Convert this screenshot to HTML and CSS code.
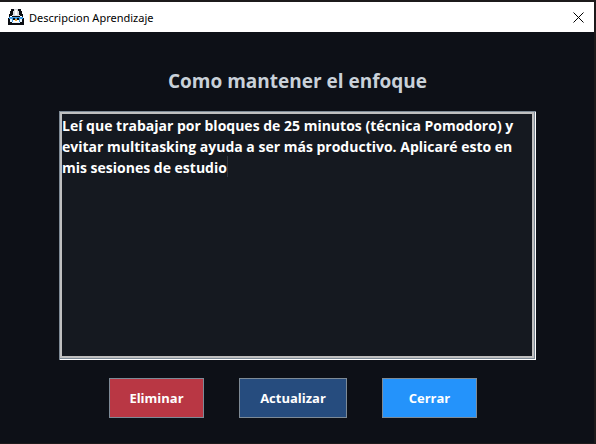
FILE: index.html
```
<!DOCTYPE html>
<html lang="es">
<head>
<meta charset="utf-8">
<title>Descripcion Aprendizaje</title>
<link rel="stylesheet" href="styles.css">
</head>
<body>
<div class="window">
  <header class="titlebar">
    <svg class="app-icon" viewBox="0 0 16 16" shape-rendering="crispEdges" aria-hidden="true">
      <path fill="#0b0d12" d="M3 0h10v2h1v3h1v4h1v7H0V9h1V5h1V2h1z"/>
      <path fill="#d9dce2" d="M6 0h4v2h1v4h1v1H4V6h1V2h1z"/>
      <path fill="#fff" d="M7 1h2v5H7zM2 7h2v1H2zM12 7h2v1h-2z"/>
      <path fill="#3d9be8" d="M1 8h14v2h-1v2h-2v1H4v-1H2v-2H1z"/>
      <path fill="#e9f5fd" d="M2 10h2v3H2zM12 10h2v3h-2zM4 13h8v1H4z"/>
      <path fill="#0b0d12" d="M5 9h2v2H5zM9 9h2v2H9z"/>
      <path fill="#fff" d="M5 11h6v2H5z"/>
      <path fill="#f0a72c" d="M7 10h2v2H7z"/>
    </svg>
    <h1 class="titlebar-text">Descripcion Aprendizaje</h1>
    <button class="close" type="button" aria-label="Cerrar ventana">
      <svg viewBox="0 0 11 11" aria-hidden="true"><path d="M.5 .5l10 10M10.500 .5l-10 10"/></svg>
    </button>
  </header>
  <main class="content">
    <label class="heading" for="descripcion">Como mantener el enfoque</label>
    <div class="field">
      <textarea id="descripcion" spellcheck="false">Leí que trabajar por bloques de 25 minutos (técnica Pomodoro) y evitar multitasking ayuda a ser más productivo. Aplicaré esto en mis sesiones de estudio</textarea>
      <span class="caret"></span>
    </div>
    <div class="actions">
      <button class="btn btn-delete" type="button">Eliminar</button>
      <button class="btn btn-update" type="button">Actualizar</button>
      <button class="btn btn-close" type="button">Cerrar</button>
    </div>
  </main>
</div>
</body>
</html>
```
FILE: styles.css
```
* { box-sizing: border-box; }

body {
  margin: 0;
  background: #0d1017;
  font-family: "Open Sans", "Noto Sans", sans-serif;
}

.window {
  display: flex;
  flex-direction: column;
  min-height: 100vh;
  border: solid #1c1a1b;
  border-width: 2px 2px 1px 0;
}

.titlebar {
  display: flex;
  align-items: center;
  height: 30px;
  padding: 0 10px 0 8px;
  background: #fff;
  color: #000;
}

.app-icon { width: 16px; height: 16px; margin-right: 5px; }

.titlebar-text {
  flex: 1;
  margin: 0;
  font-family: "Noto Sans", sans-serif;
  font-size: 11px;
  font-weight: 400;
}

.close {
  display: flex;
  padding: 0;
  border: 0;
  background: none;
}

.close svg { width: 11px; height: 11px; }
.close path { stroke: #000; fill: none; }

.content {
  flex: 1;
  display: flex;
  flex-direction: column;
  padding: 34px 58px 25px 59px;
}

.heading {
  color: #c9d1d9;
  font-size: 19px;
  font-weight: 700;
  line-height: 30px;
  text-align: center;
  margin-bottom: 15px;
}

.field {
  position: relative;
  flex: 1;
  display: flex;
  border: solid #7d8a96;
  border-width: 1px 0 0 1px;
  box-shadow: inset -1px -1px #fff, inset -2px -2px #7d8a96;
  padding: 0 2px 2px 0;
}

textarea {
  flex: 1;
  min-width: 0;
  margin: 0;
  padding: 1px 0 0;
  border: 2px solid #c0c0c0;
  outline: 0;
  border-radius: 0;
  resize: none;
  background: #151920;
  color: #fff;
  font: 700 14px/21px "Open Sans", "Noto Sans", sans-serif;
}

/* Insertion point at the end of the text */
.caret {
  position: absolute;
  left: 167px;
  top: 44px;
  width: 1px;
  height: 21px;
  background: #30353d;
}

.actions {
  display: flex;
  justify-content: center;
  gap: 35px;
  margin-top: 18px;
  padding-right: 9px;
}

.btn {
  width: 95px;
  height: 40px;
  padding: 0;
  border: 1px solid #7d8a96;
  color: #fff;
  font: 700 13px/20px "Open Sans", "Noto Sans", sans-serif;
}

.btn-delete { background: #b93744; }
.btn-update { width: 108px; background: #264c7e; }
.btn-close { background: #2493fb; }
```
